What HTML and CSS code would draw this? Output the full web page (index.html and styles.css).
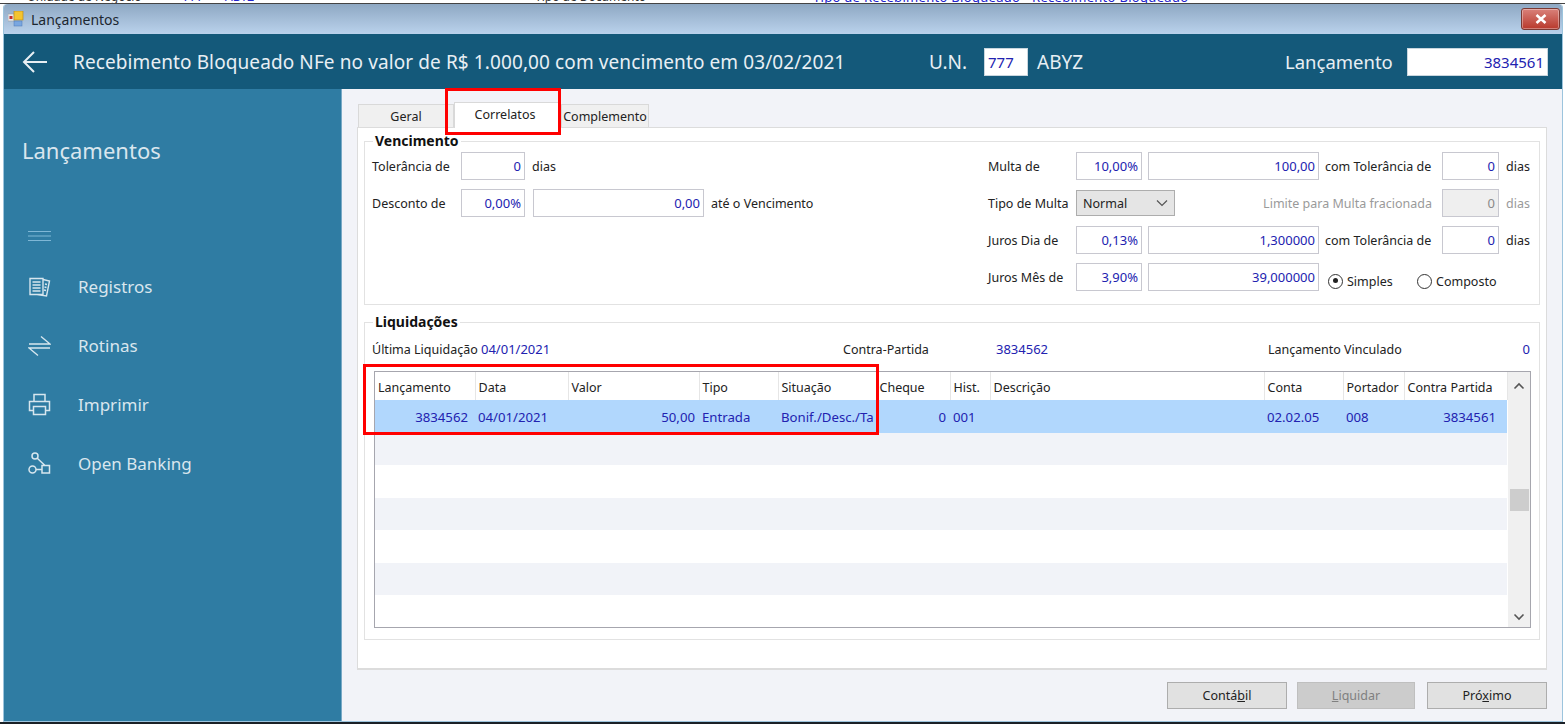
FILE: index.html
```html
<!DOCTYPE html>
<html lang="pt-BR">
<head>
<meta charset="utf-8">
<title>Lançamentos</title>
<link rel="stylesheet" href="styles.css">
</head>
<body>
<div class="backdrop-top"><span class="cut c1">Unidade de Negócio</span><span class="cut c2">777</span><span class="cut c3">ABYZ</span><span class="cut c4">Tipo de Documento</span><span class="cut c5">Tipo de Recebimento Bloqueado - Recebimento Bloqueado</span></div>
<div class="window">
  <div class="titlebar">
    <svg class="appicon" viewBox="0 0 16 16"><rect x="0" y="3" width="6" height="7" fill="#e9e9e9" stroke="#999" stroke-width=".5"/><rect x="1.5" y="5" width="3" height="3" fill="#c62a2a"/><rect x="6" y="0" width="9" height="9" fill="#f4c430" stroke="#b98c1a" stroke-width=".7"/><rect x="6" y="10" width="8" height="5" fill="#7aa7e0" stroke="#4c78b8" stroke-width=".5"/></svg>
    <span class="wintitle">Lançamentos</span>
    <div class="closebtn"><svg viewBox="0 0 12 10" width="12" height="10"><path d="M1.5 1 L10.5 9 M10.5 1 L1.5 9" stroke="#fff" stroke-width="2.6"/></svg></div>
  </div>
  <header class="appbar">
    <svg class="backicon" viewBox="0 0 26 24" width="26" height="24"><path d="M25 12 H2 M12 2 L2 12 L12 22" fill="none" stroke="#e8eff4" stroke-width="2"/></svg>
    <div class="headline">Recebimento Bloqueado NFe no valor de R$ 1.000,00 com vencimento em 03/02/2021</div>
    <div class="un">U.N.</div>
    <div class="hfield hf-un">777</div>
    <div class="abyz">ABYZ</div>
    <div class="lanc">Lançamento</div>
    <div class="hfield hf-lanc">3834561</div>
  </header>
  <div class="body">
    <aside class="sidebar">
      <div class="sidetitle">Lançamentos</div>
      <svg class="hamb" viewBox="0 0 23 12" width="23" height="12"><path d="M0 1.5H23M0 6H23M0 10.5H23" stroke="#7fb7d6" stroke-width="1.2"/></svg>
      <nav class="menu">
        <div class="mitem"><svg viewBox="0 0 23 23" width="23" height="23" class="micon"><path d="M2 3.5H15V19.5H2Z M4.5 7H12.5M4.5 10H12.5M4.5 13H12.5M4.5 16H12.5 M15 4.5L21.5 6L18.5 21L9 19.5 M17 9L19 9.5M16.5 12L18.5 12.5M16 15L18 15.5" fill="none" stroke="#d7e6ee" stroke-width="1.4"/></svg><span>Registros</span></div>
        <div class="mitem"><svg viewBox="0 0 23 23" width="23" height="23" class="micon"><path d="M1 10H22L13 2.5 M22 14H1L10 21.5" fill="none" stroke="#d7e6ee" stroke-width="1.4"/></svg><span>Rotinas</span></div>
        <div class="mitem"><svg viewBox="0 0 23 23" width="23" height="23" class="micon"><path d="M6 8V1.5H17V8 M5.5 17.5H1.5V8.5H21.5V17.5H17.5 M5.5 13.5H17.5V21.5H5.5Z" fill="none" stroke="#d7e6ee" stroke-width="1.5"/></svg><span>Imprimir</span></div>
        <div class="mitem"><svg viewBox="0 0 23 23" width="23" height="23" class="micon"><circle cx="7" cy="4" r="3" fill="none" stroke="#d7e6ee" stroke-width="1.5"/><circle cx="4.5" cy="17.5" r="3.5" fill="none" stroke="#d7e6ee" stroke-width="1.5"/><path d="M9 6L17 13.5 M8 17.5H14 M14 13.5H21.5V21H14Z" fill="none" stroke="#d7e6ee" stroke-width="1.5"/></svg><span>Open Banking</span></div>
      </nav>
    </aside>
    <main class="content">
      <div class="tabs">
        <div class="tab tab-geral">Geral</div>
        <div class="tab tab-active">Correlatos</div>
        <div class="tab tab-comp">Complemento</div>
        <div class="redbox red-tab"></div>
      </div>
      <section class="page">
        <fieldset class="group venc">
          <legend>Vencimento</legend>
          <div class="venc-cols">
            <div class="venc-left">
              <div class="lrow"><span class="lbl l-w">Tolerância de</span><div class="fld f-64">0</div><span class="lbl after">dias</span></div>
              <div class="lrow"><span class="lbl l-w">Desconto de</span><div class="fld f-64">0,00%</div><div class="fld f-171">0,00</div><span class="lbl after">até o Vencimento</span></div>
            </div>
            <div class="venc-right">
              <span class="lbl">Multa de</span><div class="fld">10,00%</div><div class="fld amt">100,00</div><span class="lbl pad">com Tolerância de</span><div class="fld">0</div><span class="lbl pad2">dias</span>
              <span class="lbl">Tipo de Multa</span><div class="combo"><span>Normal</span><svg viewBox="0 0 12 8" width="12" height="8"><path d="M1 1.5L6 6.5L11 1.5" fill="none" stroke="#555" stroke-width="1.2"/></svg></div><span class="lbl dim limit">Limite para Multa fracionada</span><div class="fld off">0</div><span class="lbl dim pad2">dias</span>
              <span class="lbl">Juros Dia de</span><div class="fld">0,13%</div><div class="fld amt">1,300000</div><span class="lbl pad">com Tolerância de</span><div class="fld">0</div><span class="lbl pad2">dias</span>
              <span class="lbl">Juros Mês de</span><div class="fld">3,90%</div><div class="fld amt">39,000000</div>
              <div class="radios"><span class="radio on"></span><span class="lbl r1">Simples</span><span class="radio"></span><span class="lbl">Composto</span></div>
            </div>
          </div>
        </fieldset>
        <fieldset class="group liq">
          <legend>Liquidações</legend>
          <div class="inforow">
            <span class="lbl i1">Última Liquidação</span><span class="val i2">04/01/2021</span>
            <span class="lbl i3">Contra-Partida</span><span class="val i4">3834562</span>
            <span class="lbl i5">Lançamento Vinculado</span><span class="val i6">0</span>
          </div>
          <div class="gridwrap">
            <div class="gridmain">
              <table class="grid">
                <colgroup><col class="w1"><col class="w2"><col class="w3"><col class="w4"><col class="w5"><col class="w6"><col class="w7"><col class="w8"><col class="w9"><col class="w10"><col class="w11"></colgroup>
                <thead><tr><th>Lançamento</th><th>Data</th><th>Valor</th><th>Tipo</th><th>Situação</th><th>Cheque</th><th>Hist.</th><th>Descrição</th><th>Conta</th><th>Portador</th><th>Contra Partida</th></tr></thead>
                <tbody>
                  <tr class="sel"><td class="r">3834562</td><td>04/01/2021</td><td class="r">50,00</td><td>Entrada</td><td class="clip">Bonif./Desc./Ta</td><td class="r">0</td><td>001</td><td></td><td class="ind">02.02.05</td><td>008</td><td class="r last">3834561</td></tr>
                  <tr class="alt"><td colspan="11"></td></tr>
                  <tr><td colspan="11"></td></tr>
                  <tr class="alt"><td colspan="11"></td></tr>
                  <tr><td colspan="11"></td></tr>
                  <tr class="alt"><td colspan="11"></td></tr>
                  <tr><td colspan="11"></td></tr>
                </tbody>
              </table>
            </div>
            <div class="scroll">
              <svg viewBox="0 0 12 8" width="12" height="8"><path d="M1.5 6.5L6 2L10.5 6.5" fill="none" stroke="#555" stroke-width="1.6"/></svg>
              <div class="thumb"></div>
              <svg viewBox="0 0 12 8" width="12" height="8"><path d="M1.5 1.5L6 6L10.5 1.5" fill="none" stroke="#555" stroke-width="1.6"/></svg>
            </div>
            <div class="redbox red-grid"></div>
          </div>
        </fieldset>
      </section>
      <div class="actions">
        <button class="btn" type="button">Contá<u>b</u>il</button>
        <button class="btn off" type="button"><u>L</u>iquidar</button>
        <button class="btn" type="button">Pró<u>x</u>imo</button>
      </div>
    </main>
  </div>
</div>
<div class="backdrop-bottom"></div>
</body>
</html>
```
FILE: styles.css
```css
* { box-sizing: border-box; }
html, body { margin: 0; height: 724px; overflow: hidden; }
body { background: #fff; font-family: "Noto Sans", "Open Sans", sans-serif; font-size: 12.5px; color: #222; display: flex; flex-direction: column; }

.backdrop-top { height: 4px; background: #fff; border-bottom: 1px solid #444; overflow: hidden; display: flex; white-space: nowrap; font-size: 12px; line-height: 4px; flex: none; }
.cut { display: block; margin-top: -5px; }
.c1 { margin-left: 27px; width: 156px; color: #333; }
.c2 { width: 42px; color: #22c; }
.c3 { width: 310px; color: #22c; }
.c4 { width: 278px; color: #333; }
.c5 { color: #22c; font-size: 13px; letter-spacing: .3px; }

.window { height: 718px; flex: none; display: flex; flex-direction: column; margin: 0 2px 0 3px; border: 1px solid #9cc4dd; border-top: 0; border-radius: 4px 4px 0 0; background: #f2f3f8; }
.backdrop-bottom { height: 2px; background: #1a2026; flex: none; }

.titlebar { height: 30px; flex: none; display: flex; align-items: center; padding-left: 4px; background: linear-gradient(#8ea8c3, #bad2ec); border-radius: 4px 4px 0 0; }
.appicon { width: 16px; height: 16px; }
.wintitle { margin-left: 7px; font-size: 14px; color: #1c2730; }
.closebtn { margin-left: auto; margin-right: 2px; width: 39px; height: 22px; display: flex; align-items: center; justify-content: center; background: linear-gradient(#d9817a, #b8392c); border: 1px solid #7b3a34; border-radius: 3px; box-shadow: inset 0 0 0 1px rgba(255,255,255,.35); }

.appbar { height: 55px; flex: none; display: flex; align-items: center; background: #14597a; color: #e8eff4; font-size: 19px; padding-left: 18px; }
.backicon { flex: none; }
.headline { margin-left: 25px; width: 856px; white-space: nowrap; letter-spacing: .1px; }
.un { width: 55px; }
.hfield { height: 28px; background: #fff; border: 1px solid #c9d6de; color: #2222b0; font-size: 15px; line-height: 26px; padding: 0 3px; }
.hf-un { width: 44px; }
.abyz { margin-left: 9px; width: 248px; }
.lanc { width: 122px; font-size: 18.5px; }
.hf-lanc { width: 141px; text-align: right; }

.body { flex: 1; display: flex; min-height: 0; }
.sidebar { width: 338px; flex: none; background: #2f7ca3; border-right: 1px solid #78a9c6; color: #d9e6ee; padding: 46px 0 0 18px; }
.sidetitle { font-size: 22px; line-height: 30px; }
.hamb { display: block; margin: 65px 0 0 6px; }
.menu { margin-top: 32px; display: flex; flex-direction: column; gap: 35px; }
.mitem { display: flex; align-items: center; gap: 27px; height: 24px; padding-left: 6px; font-size: 17px; }
.micon { flex: none; }

.content { flex: 1; display: flex; flex-direction: column; padding: 14px 15px 0 15px; min-width: 0; }
.tabs { height: 24px; flex: none; display: flex; align-items: flex-end; position: relative; padding-left: 1px; z-index: 1; }
.tab { height: 23px; background: #f0f0f0; border: 1px solid #d9d9d9; border-bottom: 0; text-align: center; line-height: 24px; }
.tab-geral { width: 96px; }
.tab-active { width: 106px; height: 26px; background: #fff; margin-bottom: -1px; line-height: 23px; padding-right: 4px; }
.tab-comp { width: 88px; margin-left: 1px; }
.redbox { position: absolute; border: 3px solid #f00; pointer-events: none; }
.red-tab { left: 88px; top: -15px; width: 116px; height: 47px; }

.page { height: 543px; flex: none; background: #fff; border: 1px solid #dcdcdc; border-bottom-width: 2px; padding: 0 6px; }
.group { margin: 0; border: 1px solid #e2e2e2; padding: 0; min-width: 0; }
.group legend { font-weight: 700; font-size: 14px; line-height: 16px; padding: 0 2px; margin-left: 8px; color: #111; }
.venc { height: 172px; margin-top: 5px; }
.venc-cols { display: flex; justify-content: space-between; padding: 3px 0 0 7px; }
.lrow { display: flex; align-items: center; height: 28px; margin-bottom: 9px; }
.lbl { white-space: nowrap; }
.l-w { width: 89px; }
.after { margin-left: 7px; }
.fld { height: 28px; background: #fff; border: 1px solid #c8c8d0; color: #2222b0; text-align: right; font-size: 13px; line-height: 26px; padding: 0 3px; }
.f-64 { width: 64px; }
.f-171 { width: 171px; margin-left: 8px; }
.venc-right { display: grid; grid-template-columns: 88px 66px 177px 123px 57px 40px; row-gap: 9px; align-items: center; }
.amt { margin-left: 6px; }
.pad { padding-left: 6px; }
.pad2 { padding-left: 7px; }
.combo { grid-column: 2 / span 2; grid-row: 2; width: 99px; height: 26px; background: #e5e5e5; border: 1px solid #adadad; display: flex; align-items: center; justify-content: space-between; padding: 0 6px; }
.dim { color: #9a9a9a; }
.limit { grid-column: 3 / span 2; grid-row: 2; justify-self: end; padding-right: 10px; }
.fld.off { background: #efefef; color: #8a8a8a; }
.radios { grid-column: 4 / span 3; display: flex; align-items: center; padding: 8px 0 0 9px; }
.radio { width: 15px; height: 15px; border: 1.5px solid #333; border-radius: 50%; margin-right: 4px; position: relative; background: #fff; flex: none; }
.radio.on::after { content: ""; position: absolute; left: 3.5px; top: 3.5px; width: 5px; height: 5px; background: #222; border-radius: 50%; }
.r1 { width: 70px; }

.liq { height: 326px; margin-top: 9px; }
.inforow { display: flex; align-items: center; height: 20px; padding: 2px 9px 0 7px; margin-top: 8px; }
.val { color: #2222b0; font-size: 13px; }
.i1 { width: 109px; }
.i2 { width: 362px; }
.i3 { width: 153px; }
.i4 { width: 272px; }
.i5 { flex: 1; }
.gridwrap { position: relative; display: flex; height: 257px; margin: 13px 8px 0 9px; border: 1px solid #a6a6ae; background: #fff; }
.gridmain { flex: 1; min-width: 0; }
.grid { border-collapse: collapse; table-layout: fixed; width: 1132px; }
.w1 { width: 100px; } .w2 { width: 93px; } .w3 { width: 131px; } .w4 { width: 79px; } .w5 { width: 98px; } .w6 { width: 74px; } .w7 { width: 40px; } .w8 { width: 274px; } .w9 { width: 79px; } .w10 { width: 61px; } .w11 { width: 103px; }
.grid th { height: 28px; font-weight: 400; text-align: left; padding: 3px 3px 0; border-right: 1px solid #e6e6e6; white-space: nowrap; overflow: hidden; }
.grid td { height: 32.5px; padding: 1px 4px 0 3px; color: #2222b0; font-size: 13.2px; white-space: nowrap; overflow: hidden; }
.sel td { background: #b1d7fd; }
.alt td { background: #f1f3f8; }
.r { text-align: right; }
.sel .r:first-child { padding-right: 7px; }
.ind { padding-left: 6px; }
.sel .last { padding-right: 11px; }
.clip { text-overflow: clip; }
.scroll { width: 22px; background: #f0f0f0; flex: none; display: flex; flex-direction: column; align-items: center; padding: 10px 0 6px; position: relative; }
.thumb { width: 19px; height: 22px; background: #cdcdcd; margin: 99px 0 auto; }
.red-grid { left: -12px; top: -8px; width: 516px; height: 71px; }

.actions { display: flex; justify-content: flex-end; gap: 10px; margin-top: 12px; }
.btn { width: 120px; height: 27px; background: #e1e1e1; border: 1px solid #adadad; font: inherit; color: #222; padding: 0; }
.btn.off { width: 118px; background: #cccccc; color: #808080; border-color: #bfbfbf; margin-right: 2px; }
```
